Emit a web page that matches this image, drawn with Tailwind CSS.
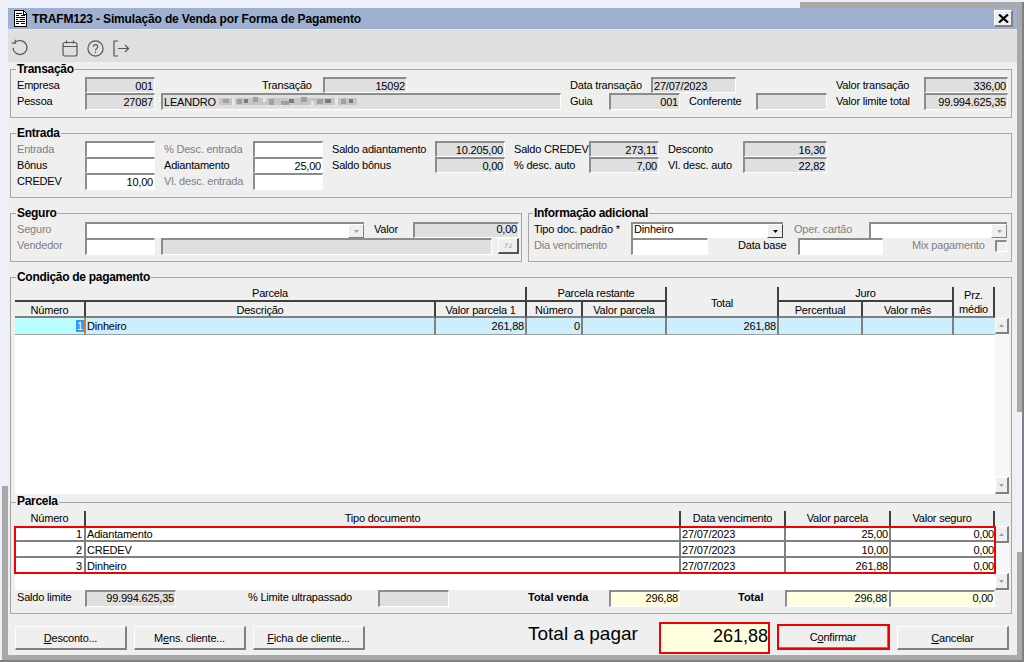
<!DOCTYPE html>
<html lang="pt-BR">
<head>
<meta charset="utf-8">
<title>TRAFM123</title>
<script src="https://cdn.jsdelivr.net/npm/@tailwindcss/browser@4"></script>
</head>
<body class="m-0 overflow-hidden">
<div class="relative w-[1024px] h-[662px] overflow-hidden bg-[#a9a9a9] font-['Liberation_Sans',sans-serif] text-[11px] leading-[14px] tracking-[-0.2px] whitespace-nowrap text-black">
  <!-- other windows behind -->
  <div class="absolute left-0 top-0 w-[800px] h-[8px] bg-[#eef0fc]"></div>
  <div class="absolute left-[800px] top-0 w-[224px] h-[2px] bg-[#eef0fc]"></div>
  <div class="absolute left-0 top-0 w-[8px] h-[486px] bg-[#eef0fc]"></div>
  <div class="absolute left-0 top-[486px] w-[2px] h-[176px] bg-[#eef0fc]"></div>
  <div class="absolute left-[1017px] top-[412px] w-[5px] h-[140px] bg-[#eef0fc]"></div>
  <div class="absolute left-[1022px] top-[2px] w-[2px] h-[660px] bg-[#808080]"></div>
  <div class="absolute left-0 top-[660px] w-[1024px] h-[2px] bg-[#808080]"></div>

  <div class="absolute left-[8px] top-[8px] w-[1009px] h-[647px] bg-[#efefef] flex flex-col">
    <!-- title bar -->
    <div class="h-[22px] shrink-0 bg-[#9fb0d1] border-b border-b-[#e8e8e8] flex items-center relative">
      <svg class="ml-[6px] shrink-0" width="13" height="17" viewBox="0 0 13 17" shape-rendering="crispEdges">
        <path d="M0.5 0.5H9.5L12.5 3.5V16.5H0.5Z" fill="#fff" stroke="#000"/>
        <path d="M2 3H8M2 5H5M7 5H11M2 7H11M2 9H4M6 9H11M2 11H11M2 13H5M7 13H11" stroke="#000" fill="none"/>
        <path d="M9 1V4H12" fill="none" stroke="#000"/>
      </svg>
      <span class="ml-[5px] font-bold text-[12px] tracking-[-0.15px] text-black">TRAFM123 - Simulação de Venda por Forma de Pagamento</span>
      <button class="absolute left-[986px] top-[2px] w-[19px] h-[17px] bg-[#efefef] border-t border-l border-t-white border-l-white border-r-2 border-b-2 border-r-[#808080] border-b-[#808080] flex items-center justify-center" aria-label="Fechar">
        <svg width="11" height="9" viewBox="0 0 11 9"><path d="M1 0.5L10 8.5M10 0.5L1 8.5" stroke="#000" stroke-width="2.2" fill="none"/></svg>
      </button>
    </div>
    <!-- toolbar -->
    <div class="h-[32px] shrink-0 bg-[#dfdfdf] relative flex items-center">
      <svg class="ml-[3px] mt-[4px] shrink-0" width="18" height="18" viewBox="0 0 18 18" fill="none" stroke="#555" stroke-width="1.2"><path d="M4 3.6A7 7 0 1 1 2 9"/><path d="M4.2 0.8V4.2H0.8"/></svg>
      <svg class="ml-[33px] mt-[4px] shrink-0" width="16" height="17" viewBox="0 0 16 17" fill="none" stroke="#555" stroke-width="1.2"><rect x="1" y="2.5" width="14" height="13.5" rx="2"/><path d="M1 6.5H15M4.5 0.5V3.5M11.5 0.5V3.5"/></svg>
      <svg class="ml-[9px] mt-[4px] shrink-0" width="17" height="17" viewBox="0 0 17 17" fill="none" stroke="#555" stroke-width="1.2"><circle cx="8.5" cy="8.5" r="7.6"/><path d="M6.3 6.8A2.2 2.2 0 1 1 9.5 8.7C8.8 9.1 8.5 9.5 8.5 10.4"/><path d="M8.5 11.8V13"/></svg>
      <svg class="ml-[9px] mt-[4px] shrink-0" width="17" height="17" viewBox="0 0 17 17" fill="none" stroke="#555" stroke-width="1.2"><path d="M5 1H1V16H5"/><path d="M5 8.5H15.5M12 5L15.5 8.5L12 12"/></svg>
    </div>

    <!-- Transação -->
    <div class="relative ml-[2px] mt-[7px] w-[1002px] h-[49px] shrink-0 border border-[#a6a6a6] pt-[7px] pl-[6px]">
      <span class="absolute left-[5px] -top-[8px] bg-[#efefef] px-[1px] font-bold text-[12px] tracking-[-0.3px]">Transação</span>
      <div class="flex h-[16px]">
        <span class="w-[68px] shrink-0 leading-[17px]">Empresa</span>
        <div class="w-[70px] shrink-0 bg-[#dfdfdf] border-t-2 border-l-2 border-r border-b border-t-[#8c8c8c] border-l-[#8c8c8c] border-r-white border-b-white text-right pr-[1px]">001</div>
        <span class="ml-[107px] w-[61px] shrink-0 leading-[17px]">Transação</span>
        <div class="w-[84px] shrink-0 bg-[#dfdfdf] border-t-2 border-l-2 border-r border-b border-t-[#8c8c8c] border-l-[#8c8c8c] border-r-white border-b-white text-right pr-[1px]">15092</div>
        <span class="ml-[163px] w-[81px] shrink-0 leading-[17px]">Data transação</span>
        <div class="w-[85px] shrink-0 bg-[#dfdfdf] border-t-2 border-l-2 border-r border-b border-t-[#8c8c8c] border-l-[#8c8c8c] border-r-white border-b-white pl-[1px]">27/07/2023</div>
        <span class="ml-[100px] w-[88px] shrink-0 leading-[17px]">Valor transação</span>
        <div class="w-[84px] shrink-0 bg-[#dfdfdf] border-t-2 border-l-2 border-r border-b border-t-[#8c8c8c] border-l-[#8c8c8c] border-r-white border-b-white text-right pr-[1px]">336,00</div>
      </div>
      <div class="flex h-[17px]">
        <span class="w-[68px] shrink-0 leading-[17px]">Pessoa</span>
        <div class="w-[70px] shrink-0 bg-[#dfdfdf] border-t-2 border-l-2 border-r border-b border-t-[#8c8c8c] border-l-[#8c8c8c] border-r-white border-b-white text-right pr-[1px]">27087</div>
        <div class="ml-[6px] w-[400px] shrink-0 bg-[#dfdfdf] border-t-2 border-l-2 border-r border-b border-t-[#8c8c8c] border-l-[#8c8c8c] border-r-white border-b-white pl-[1px] flex">
          <span>LEANDRO</span>
          <svg class="ml-[3px] mt-[1px]" width="138" height="11" viewBox="0 0 138 11" shape-rendering="crispEdges">
            <rect x="0" y="2" width="138" height="7" fill="#c6c6c6"/>
            <g fill="#a0a0a0"><rect x="4" y="3" width="6" height="4"/><rect x="18" y="3" width="5" height="5"/><rect x="34" y="1" width="5" height="5"/><rect x="50" y="3" width="5" height="6"/><rect x="62" y="5" width="8" height="4"/><rect x="82" y="1" width="6" height="5"/><rect x="98" y="3" width="6" height="5"/><rect x="122" y="3" width="5" height="5"/></g>
            <g fill="#7a7a7a"><rect x="25" y="3" width="4" height="4"/><rect x="70" y="3" width="5" height="4"/><rect x="106" y="3" width="6" height="4"/><rect x="130" y="3" width="4" height="4"/></g>
            <g fill="#e8e8e8"><rect x="13" y="2" width="3" height="7"/><rect x="44" y="2" width="3" height="4"/><rect x="92" y="5" width="3" height="4"/><rect x="116" y="2" width="3" height="7"/></g>
          </svg>
        </div>
        <span class="ml-[9px] w-[39px] shrink-0 leading-[17px]">Guia</span>
        <div class="w-[71px] shrink-0 bg-[#dfdfdf] border-t-2 border-l-2 border-r border-b border-t-[#8c8c8c] border-l-[#8c8c8c] border-r-white border-b-white text-right pr-[1px]">001</div>
        <span class="ml-[9px] w-[67px] shrink-0 leading-[17px]">Conferente</span>
        <div class="w-[71px] shrink-0 bg-[#dfdfdf] border-t-2 border-l-2 border-r border-b border-t-[#8c8c8c] border-l-[#8c8c8c] border-r-white border-b-white"></div>
        <span class="ml-[9px] w-[88px] shrink-0 leading-[17px]">Valor limite total</span>
        <div class="w-[84px] shrink-0 bg-[#dfdfdf] border-t-2 border-l-2 border-r border-b border-t-[#8c8c8c] border-l-[#8c8c8c] border-r-white border-b-white text-right pr-[1px]">99.994.625,35</div>
      </div>
    </div>

    <!-- Entrada -->
    <div class="relative ml-[2px] mt-[15px] w-[1002px] h-[65px] shrink-0 border border-[#a6a6a6] pt-[7px] pl-[6px]">
      <span class="absolute left-[5px] -top-[8px] bg-[#efefef] px-[1px] font-bold text-[12px] tracking-[-0.3px]">Entrada</span>
      <div class="flex h-[16px]">
        <span class="w-[68px] shrink-0 leading-[17px] text-[#808080]">Entrada</span>
        <div class="w-[70px] shrink-0 bg-white border-t-2 border-l-2 border-r border-b border-t-[#8c8c8c] border-l-[#8c8c8c] border-r-white border-b-white"></div>
        <span class="ml-[9px] w-[89px] shrink-0 leading-[17px] text-[#808080]">% Desc. entrada</span>
        <div class="w-[70px] shrink-0 bg-white border-t-2 border-l-2 border-r border-b border-t-[#8c8c8c] border-l-[#8c8c8c] border-r-white border-b-white"></div>
        <span class="ml-[9px] w-[103px] shrink-0 leading-[17px]">Saldo adiantamento</span>
        <div class="w-[70px] shrink-0 bg-[#dfdfdf] border-t-2 border-l-2 border-r border-b border-t-[#8c8c8c] border-l-[#8c8c8c] border-r-white border-b-white text-right pr-[1px]">10.205,00</div>
        <span class="ml-[9px] w-[75px] shrink-0 leading-[17px]">Saldo CREDEV</span>
        <div class="w-[70px] shrink-0 bg-[#dfdfdf] border-t-2 border-l-2 border-r border-b border-t-[#8c8c8c] border-l-[#8c8c8c] border-r-white border-b-white text-right pr-[1px]">273,11</div>
        <span class="ml-[9px] w-[75px] shrink-0 leading-[17px]">Desconto</span>
        <div class="w-[84px] shrink-0 bg-[#dfdfdf] border-t-2 border-l-2 border-r border-b border-t-[#8c8c8c] border-l-[#8c8c8c] border-r-white border-b-white text-right pr-[1px]">16,30</div>
      </div>
      <div class="flex h-[16px]">
        <span class="w-[68px] shrink-0 leading-[17px]">Bônus</span>
        <div class="w-[70px] shrink-0 bg-white border-t-2 border-l-2 border-r border-b border-t-[#8c8c8c] border-l-[#8c8c8c] border-r-white border-b-white"></div>
        <span class="ml-[9px] w-[89px] shrink-0 leading-[17px]">Adiantamento</span>
        <div class="w-[70px] shrink-0 bg-white border-t-2 border-l-2 border-r border-b border-t-[#8c8c8c] border-l-[#8c8c8c] border-r-white border-b-white text-right pr-[1px]">25,00</div>
        <span class="ml-[9px] w-[103px] shrink-0 leading-[17px]">Saldo bônus</span>
        <div class="w-[70px] shrink-0 bg-[#dfdfdf] border-t-2 border-l-2 border-r border-b border-t-[#8c8c8c] border-l-[#8c8c8c] border-r-white border-b-white text-right pr-[1px]">0,00</div>
        <span class="ml-[9px] w-[75px] shrink-0 leading-[17px]">% desc. auto</span>
        <div class="w-[70px] shrink-0 bg-[#dfdfdf] border-t-2 border-l-2 border-r border-b border-t-[#8c8c8c] border-l-[#8c8c8c] border-r-white border-b-white text-right pr-[1px]">7,00</div>
        <span class="ml-[9px] w-[75px] shrink-0 leading-[17px]">Vl. desc. auto</span>
        <div class="w-[84px] shrink-0 bg-[#dfdfdf] border-t-2 border-l-2 border-r border-b border-t-[#8c8c8c] border-l-[#8c8c8c] border-r-white border-b-white text-right pr-[1px]">22,82</div>
      </div>
      <div class="flex h-[17px]">
        <span class="w-[68px] shrink-0 leading-[17px]">CREDEV</span>
        <div class="w-[70px] shrink-0 bg-white border-t-2 border-l-2 border-r border-b border-t-[#8c8c8c] border-l-[#8c8c8c] border-r-white border-b-white text-right pr-[1px]">10,00</div>
        <span class="ml-[9px] w-[89px] shrink-0 leading-[17px] text-[#808080]">Vl. desc. entrada</span>
        <div class="w-[70px] shrink-0 bg-white border-t-2 border-l-2 border-r border-b border-t-[#8c8c8c] border-l-[#8c8c8c] border-r-white border-b-white"></div>
      </div>
    </div>

    <!-- Seguro + Informação adicional -->
    <div class="ml-[2px] mt-[15px] flex gap-[6px] shrink-0">
      <div class="relative w-[512px] h-[49px] shrink-0 border border-[#a6a6a6] pt-[8px] pl-[6px]">
        <span class="absolute left-[5px] -top-[8px] bg-[#efefef] px-[1px] font-bold text-[12px] tracking-[-0.3px]">Seguro</span>
        <div class="flex h-[16px]">
          <span class="w-[68px] shrink-0 leading-[15px] text-[#808080]">Seguro</span>
          <div class="w-[279px] h-[16px] shrink-0 bg-white border-t-2 border-l-2 border-t-[#8c8c8c] border-l-[#8c8c8c] flex justify-end">
            <div class="w-[16px] h-[14px] bg-[#efefef] border-t border-l border-t-white border-l-white border-r border-b border-r-[#808080] border-b-[#808080] flex items-center justify-center">
              <svg width="5" height="3" viewBox="0 0 5 3"><path d="M0 0H5L2.5 3Z" fill="#a0a0a0"/></svg>
            </div>
          </div>
          <span class="ml-[10px] w-[39px] shrink-0 leading-[15px]">Valor</span>
          <div class="w-[106px] shrink-0 bg-[#dfdfdf] border-t-2 border-l-2 border-r border-b border-t-[#8c8c8c] border-l-[#8c8c8c] border-r-white border-b-white text-right pr-[1px] leading-[11px]">0,00</div>
        </div>
        <div class="flex h-[17px]">
          <span class="w-[68px] shrink-0 leading-[15px] text-[#808080]">Vendedor</span>
          <div class="w-[70px] shrink-0 bg-white border-t-2 border-l-2 border-r border-b border-t-[#8c8c8c] border-l-[#8c8c8c] border-r-white border-b-white"></div>
          <div class="ml-[6px] w-[331px] shrink-0 bg-[#dfdfdf] border-t-2 border-l-2 border-r border-b border-t-[#8c8c8c] border-l-[#8c8c8c] border-r-white border-b-white"></div>
          <div class="ml-[6px] w-[21px] h-[16px] shrink-0 bg-[#efefef] border-t border-l border-t-white border-l-white border-r-2 border-b-2 border-r-[#555] border-b-[#555] flex items-center justify-center">
            <svg width="9" height="7" viewBox="0 0 9 7"><path d="M1 6L4 1M5 6L8 1M1 2H3M6 5H8" stroke="#b0b0b0" fill="none"/></svg>
          </div>
        </div>
      </div>
      <div class="relative w-[484px] h-[49px] shrink-0 border border-[#a6a6a6] pt-[8px] pl-[5px]">
        <span class="absolute left-[4px] -top-[8px] bg-[#efefef] px-[1px] font-bold text-[12px] tracking-[-0.3px]">Informação adicional</span>
        <div class="flex h-[16px]">
          <span class="w-[97px] shrink-0 leading-[15px]">Tipo doc. padrão *</span>
          <div class="w-[152px] h-[16px] shrink-0 bg-white border-t-2 border-l-2 border-t-[#8c8c8c] border-l-[#8c8c8c] flex justify-between">
            <span class="pl-[1px] leading-[11px]">Dinheiro</span>
            <div class="w-[16px] h-[14px] bg-[#efefef] border-t border-l border-t-white border-l-white border-r border-b border-r-[#404040] border-b-[#404040] flex items-center justify-center">
              <svg width="5" height="3" viewBox="0 0 5 3"><path d="M0 0H5L2.5 3Z" fill="#000"/></svg>
            </div>
          </div>
          <span class="ml-[11px] w-[75px] shrink-0 leading-[15px] text-[#808080]">Oper. cartão</span>
          <div class="w-[138px] h-[16px] shrink-0 bg-white border-t-2 border-l-2 border-t-[#8c8c8c] border-l-[#8c8c8c] flex justify-end">
            <div class="w-[16px] h-[14px] bg-[#efefef] border-t border-l border-t-white border-l-white border-r border-b border-r-[#808080] border-b-[#808080] flex items-center justify-center">
              <svg width="5" height="3" viewBox="0 0 5 3"><path d="M0 0H5L2.5 3Z" fill="#a0a0a0"/></svg>
            </div>
          </div>
        </div>
        <div class="flex h-[17px]">
          <span class="w-[97px] shrink-0 leading-[15px] text-[#808080]">Dia vencimento</span>
          <div class="w-[77px] shrink-0 bg-white border-t-2 border-l-2 border-r border-b border-t-[#8c8c8c] border-l-[#8c8c8c] border-r-white border-b-white"></div>
          <span class="ml-[30px] w-[60px] shrink-0 leading-[15px]">Data base</span>
          <div class="w-[85px] shrink-0 bg-white border-t-2 border-l-2 border-r border-b border-t-[#8c8c8c] border-l-[#8c8c8c] border-r-white border-b-white"></div>
          <span class="ml-[29px] w-[83px] shrink-0 leading-[15px] text-[#808080]">Mix pagamento</span>
          <div class="w-[12px] h-[12px] mt-[2px] shrink-0 bg-[#efefef] border-t-2 border-l-2 border-r border-b border-t-[#8c8c8c] border-l-[#8c8c8c] border-r-white border-b-white"></div>
        </div>
      </div>
    </div>

    <!-- Condição de pagamento + Parcela -->
    <div class="relative ml-[2px] mt-[15px] w-[1002px] h-[337px] shrink-0 border border-[#a6a6a6] pt-[9px]">
      <span class="absolute left-[5px] -top-[8px] bg-[#efefef] px-[1px] font-bold text-[12px] tracking-[-0.3px]">Condição de pagamento</span>
      <div class="ml-[4px] flex">
        <div class="w-[980px] shrink-0">
          <!-- header -->
          <div class="grid grid-cols-[71px_350px_91px_56px_84px_112px_84px_91px_41px] grid-rows-[15px_16px] text-center">
            <div class="col-span-3 border-b-2 border-b-[#404040] border-r-2 border-r-[#404040] leading-[13px]">Parcela</div>
            <div class="col-span-2 border-b-2 border-b-[#404040] border-r-2 border-r-[#404040] leading-[13px]">Parcela restante</div>
            <div class="row-span-2 border-b-2 border-b-[#808080] border-r-2 border-r-[#404040] flex items-center justify-center pt-[2px]">Total</div>
            <div class="col-span-2 border-b-2 border-b-[#404040] border-r-2 border-r-[#404040] leading-[13px]">Juro</div>
            <div class="row-span-2 border-b-2 border-b-[#808080] border-r-2 border-r-[#404040] flex items-center justify-center">Prz.<br>médio</div>
            <div class="border-b-2 border-b-[#808080] border-r-2 border-r-[#404040] pt-[1px]">Número</div>
            <div class="border-b-2 border-b-[#808080] border-r-2 border-r-[#404040] pt-[1px]">Descrição</div>
            <div class="border-b-2 border-b-[#808080] border-r-2 border-r-[#404040] pt-[1px]">Valor parcela 1</div>
            <div class="border-b-2 border-b-[#808080] border-r-2 border-r-[#404040] pt-[1px]">Número</div>
            <div class="border-b-2 border-b-[#808080] border-r-2 border-r-[#404040] pt-[1px]">Valor parcela</div>
            <div class="border-b-2 border-b-[#808080] border-r-2 border-r-[#404040] pt-[1px]">Percentual</div>
            <div class="border-b-2 border-b-[#808080] border-r-2 border-r-[#404040] pt-[1px]">Valor mês</div>
          </div>
          <!-- row + empty space -->
          <div class="h-[176px] bg-white">
            <div class="grid grid-cols-[71px_350px_91px_56px_84px_112px_84px_91px_41px] h-[16px] leading-[16px]">
              <div class="bg-[#b9ffff] border-r-2 border-r-[#e07a20] border-b border-b-[#a0a0a0] text-right"><span class="bg-[#3399ff] text-white px-[1px]">1</span></div>
              <div class="bg-[#cdeefd] border-r-2 border-r-[#808080] border-b border-b-[#a0a0a0] pl-[1px]">Dinheiro</div>
              <div class="bg-[#cdeefd] border-r-2 border-r-[#808080] border-b border-b-[#a0a0a0] text-right pr-[1px]">261,88</div>
              <div class="bg-[#cdeefd] border-r-2 border-r-[#808080] border-b border-b-[#a0a0a0] text-right pr-[1px]">0</div>
              <div class="bg-[#cdeefd] border-r-2 border-r-[#808080] border-b border-b-[#a0a0a0]"></div>
              <div class="bg-[#cdeefd] border-r-2 border-r-[#808080] border-b border-b-[#a0a0a0] text-right pr-[1px]">261,88</div>
              <div class="bg-[#cdeefd] border-r-2 border-r-[#808080] border-b border-b-[#a0a0a0]"></div>
              <div class="bg-[#cdeefd] border-r-2 border-r-[#808080] border-b border-b-[#a0a0a0]"></div>
              <div class="bg-[#cdeefd] border-b border-b-[#a0a0a0]"></div>
            </div>
          </div>
        </div>
        <!-- scrollbar 1 -->
        <div class="w-[14px] h-[176px] mt-[31px] shrink-0 bg-[#f7f7f7] flex flex-col justify-between">
          <div class="h-[16px] bg-[#efefef] border-t border-l border-t-white border-l-white border-r-2 border-b-2 border-r-[#808080] border-b-[#808080] flex items-center justify-center"><svg width="5" height="3" viewBox="0 0 5 3"><path d="M0 3H5L2.5 0Z" fill="#a0a0a0"/></svg></div>
          <div class="h-[17px] bg-[#efefef] border-t border-l border-t-white border-l-white border-r-2 border-b-2 border-r-[#808080] border-b-[#808080] flex items-center justify-center"><svg width="5" height="3" viewBox="0 0 5 3"><path d="M0 0H5L2.5 3Z" fill="#a0a0a0"/></svg></div>
        </div>
      </div>

      <!-- Parcela -->
      <div class="relative mt-[8px] h-px bg-[#a6a6a6]">
        <span class="absolute left-[5px] -top-[8px] bg-[#efefef] px-[1px] font-bold text-[12px] tracking-[-0.3px]">Parcela</span>
      </div>
      <div class="ml-[4px] mt-[8px] flex">
        <div class="w-[980px] shrink-0">
          <div class="grid grid-cols-[71px_595px_105px_105px_104px] h-[15px] text-center leading-[15px]">
            <div class="border-r-2 border-r-[#404040]">Número</div>
            <div class="border-r-2 border-r-[#404040]">Tipo documento</div>
            <div class="border-r-2 border-r-[#404040]">Data vencimento</div>
            <div class="border-r-2 border-r-[#404040]">Valor parcela</div>
            <div class="border-r-2 border-r-[#404040]">Valor seguro</div>
          </div>
          <div class="relative h-[64px] bg-white">
            <div class="grid grid-cols-[71px_595px_105px_105px_104px] grid-rows-[16px_16px_16px]">
              <div class="border-r-2 border-r-[#808080] border-b-2 border-b-[#808080] text-right pr-[2px] pt-[1px]">1</div>
              <div class="border-r-2 border-r-[#808080] border-b-2 border-b-[#808080] pl-[1px] pt-[1px]">Adiantamento</div>
              <div class="border-r-2 border-r-[#808080] border-b-2 border-b-[#808080] pl-[1px] pt-[1px]">27/07/2023</div>
              <div class="border-r-2 border-r-[#808080] border-b-2 border-b-[#808080] text-right pr-[1px] pt-[1px]">25,00</div>
              <div class="border-b-2 border-b-[#808080] text-right pr-[1px] pt-[1px]">0,00</div>
              <div class="border-r-2 border-r-[#808080] border-b-2 border-b-[#808080] text-right pr-[2px] pt-[1px]">2</div>
              <div class="border-r-2 border-r-[#808080] border-b-2 border-b-[#808080] pl-[1px] pt-[1px]">CREDEV</div>
              <div class="border-r-2 border-r-[#808080] border-b-2 border-b-[#808080] pl-[1px] pt-[1px]">27/07/2023</div>
              <div class="border-r-2 border-r-[#808080] border-b-2 border-b-[#808080] text-right pr-[1px] pt-[1px]">10,00</div>
              <div class="border-b-2 border-b-[#808080] text-right pr-[1px] pt-[1px]">0,00</div>
              <div class="border-r-2 border-r-[#808080] text-right pr-[2px] pt-[1px]">3</div>
              <div class="border-r-2 border-r-[#808080] pl-[1px] pt-[1px]">Dinheiro</div>
              <div class="border-r-2 border-r-[#808080] pl-[1px] pt-[1px]">27/07/2023</div>
              <div class="border-r-2 border-r-[#808080] text-right pr-[1px] pt-[1px]">261,88</div>
              <div class="text-right pr-[1px] pt-[1px]">0,00</div>
            </div>
            <div class="absolute -left-[1px] top-0 w-[982px] h-[48px] border-2 border-[#f00000]"></div>
          </div>
        </div>
        <!-- scrollbar 2 -->
        <div class="w-[14px] h-[64px] mt-[15px] shrink-0 bg-[#f7f7f7] flex flex-col justify-between">
          <div class="h-[17px] bg-[#efefef] border-t border-l border-t-white border-l-white border-r-2 border-b-2 border-r-[#808080] border-b-[#808080] flex items-center justify-center"><svg width="5" height="3" viewBox="0 0 5 3"><path d="M0 3H5L2.5 0Z" fill="#a0a0a0"/></svg></div>
          <div class="h-[17px] bg-[#efefef] border-t border-l border-t-white border-l-white border-r-2 border-b-2 border-r-[#808080] border-b-[#808080] flex items-center justify-center"><svg width="5" height="3" viewBox="0 0 5 3"><path d="M0 0H5L2.5 3Z" fill="#a0a0a0"/></svg></div>
        </div>
      </div>
      <!-- totals -->
      <div class="pl-[6px] flex h-[17px]">
        <span class="w-[68px] shrink-0 leading-[15px]">Saldo limite</span>
        <div class="w-[91px] shrink-0 bg-[#dfdfdf] border-t-2 border-l-2 border-r border-b border-t-[#8c8c8c] border-l-[#8c8c8c] border-r-white border-b-white text-right pr-[1px] leading-[12px]">99.994.625,35</div>
        <span class="ml-[72px] w-[130px] shrink-0 leading-[15px]">% Limite ultrapassado</span>
        <div class="w-[71px] shrink-0 bg-[#dfdfdf] border-t-2 border-l-2 border-r border-b border-t-[#8c8c8c] border-l-[#8c8c8c] border-r-white border-b-white"></div>
        <span class="ml-[79px] w-[81px] shrink-0 leading-[15px] font-bold tracking-normal">Total venda</span>
        <div class="w-[71px] shrink-0 bg-[#ffffe0] border-t-2 border-l-2 border-r border-b border-t-[#8c8c8c] border-l-[#8c8c8c] border-r-white border-b-white text-right pr-[1px] leading-[12px]">296,88</div>
        <span class="ml-[58px] w-[47px] shrink-0 leading-[15px] font-bold tracking-normal">Total</span>
        <div class="w-[104px] shrink-0 bg-[#ffffe0] border-t-2 border-l-2 border-r border-b border-t-[#8c8c8c] border-l-[#8c8c8c] border-r-white border-b-white text-right pr-[1px] leading-[12px]">296,88</div>
        <div class="w-[106px] shrink-0 bg-[#ffffe0] border-t-2 border-l-2 border-r border-b border-t-[#8c8c8c] border-l-[#8c8c8c] border-r-white border-b-white text-right pr-[1px] leading-[12px]">0,00</div>
      </div>
    </div>

    <!-- bottom actions -->
    <div class="mt-[8px] h-[32px] flex items-center shrink-0">
      <button class="ml-[7px] w-[112px] h-[24px] shrink-0 bg-[#efefef] border-t border-l border-t-white border-l-white border-r-2 border-b-2 border-r-[#808080] border-b-[#808080]"><u>D</u>esconto...</button>
      <button class="ml-[7px] w-[112px] h-[24px] shrink-0 bg-[#efefef] border-t border-l border-t-white border-l-white border-r-2 border-b-2 border-r-[#808080] border-b-[#808080]">M<u>e</u>ns. cliente...</button>
      <button class="ml-[7px] w-[112px] h-[24px] shrink-0 bg-[#efefef] border-t border-l border-t-white border-l-white border-r-2 border-b-2 border-r-[#808080] border-b-[#808080]"><u>F</u>icha de cliente...</button>
      <span class="ml-[163px] -mt-[8px] w-[131px] shrink-0 text-[19px] leading-[22px] tracking-normal">Total a pagar</span>
      <div class="w-[111px] h-[32px] shrink-0 bg-[#ffffe0] border-2 border-[#f00000] text-right text-[18px] leading-[24px] tracking-normal">261,88</div>
      <div class="ml-[7px] mb-[2px] w-[113px] h-[26px] shrink-0 border-2 border-[#f00000]">
        <button class="w-full h-full bg-[#efefef] border-b border-r border-b-[#808080] border-r-[#808080]">C<u>o</u>nfirmar</button>
      </div>
      <button class="ml-[7px] w-[112px] h-[24px] shrink-0 bg-[#efefef] border-t border-l border-t-white border-l-white border-r-2 border-b-2 border-r-[#808080] border-b-[#808080]"><u>C</u>ancelar</button>
    </div>
  </div>
</div>
</body>
</html>
